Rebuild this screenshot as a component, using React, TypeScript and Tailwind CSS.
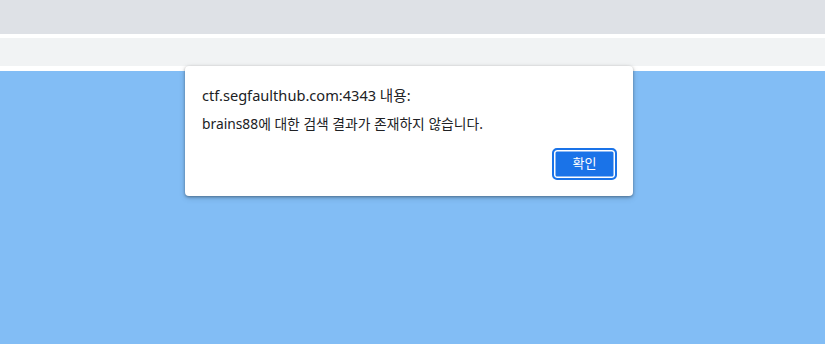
import React from 'react';

const App: React.FC = () => {
  return (
    <div
      className="w-[825px] h-[344px] flex flex-col bg-white overflow-hidden"
      style={{ fontFamily: '"Noto Sans", "Noto Sans CJK KR", sans-serif' }}
    >
      {/* Browser chrome strips */}
      <div className="h-[34px] bg-[#dee1e6]" />
      <div className="h-[4px] bg-white" />
      <div className="h-[28px] bg-[#f1f3f4]" />
      <div className="h-[5px] bg-white" />

      {/* Page area */}
      <div className="flex-1 bg-[#82bdf5] relative">
        {/* Alert dialog */}
        <div className="absolute left-[185px] top-[-5px] w-[448px] bg-white rounded-[4px] shadow-[0_1px_3px_rgba(0,0,0,0.35),0_2px_6px_rgba(0,0,0,0.15)] flex flex-col px-[17px] pt-[18px] pb-[16px]">
          <div className="text-[14.6px] leading-[22px] text-[#202124]">ctf.segfaulthub.com:4343 내용:</div>
          <div className="mt-[9px] text-[13.8px] leading-[18px] text-[#202124]">
            brains88에 대한 검색 결과가 존재하지 않습니다.
          </div>
          <div className="flex justify-end mt-[15px]">
            <button className="w-[65px] h-[32px] rounded-[5px] bg-[#1a73e8] border-2 border-[#1a73e8] shadow-[inset_0_0_0_1.5px_#ffffff] text-white text-[13px] flex items-center justify-center mr-[-1px]">
              확인
            </button>
          </div>
        </div>
      </div>
    </div>
  );
};

export default App;
